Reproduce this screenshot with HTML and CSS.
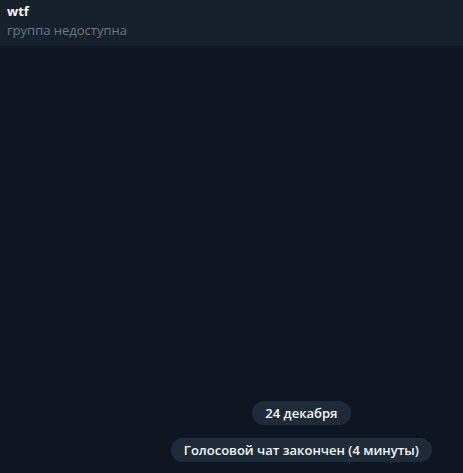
FILE: index.html
```html
<!DOCTYPE html>
<html lang="ru">
<head>
<meta charset="utf-8">
<link rel="stylesheet" href="styles.css">
</head>
<body>
<div class="app">
  <header class="topbar">
    <div class="title">wtf</div>
    <div class="status">группа недоступна</div>
  </header>
  <main class="chat">
    <div class="services">
      <span class="pill">24 декабря</span>
      <span class="pill">Голосовой чат закончен (4 минуты)</span>
    </div>
  </main>
</div>
</body>
</html>
```
FILE: styles.css
```css
html, body {
  margin: 0;
  padding: 0;
  height: 100%;
  background: #0e1621;
  font-family: "Open Sans", "Noto Sans", sans-serif;
}
.app {
  display: flex;
  flex-direction: column;
  height: 473px;
  width: 463px;
  overflow: hidden;
}
.topbar {
  height: 46px;
  box-sizing: border-box;
  background: #17212b;
  padding: 3px 0 0 7px;
  flex: none;
}
.title {
  color: #f5f5f5;
  font-weight: 700;
  font-size: 13px;
  line-height: 16px;
}
.status {
  color: #6c7883;
  font-size: 13px;
  line-height: 18px;
  margin-top: 2px;
}
.chat {
  flex: 1;
  display: flex;
  flex-direction: column;
  justify-content: flex-end;
  align-items: flex-end;
  padding: 0 31px 11px 0;
}
.services {
  display: flex;
  flex-direction: column;
  align-items: center;
  gap: 13px;
}
.pill {
  background: #1e2c3a;
  color: #f5f5f5;
  font-weight: 600;
  font-size: 13px;
  line-height: 24px;
  padding: 0 13px;
  border-radius: 12px;
  white-space: nowrap;
}
```
